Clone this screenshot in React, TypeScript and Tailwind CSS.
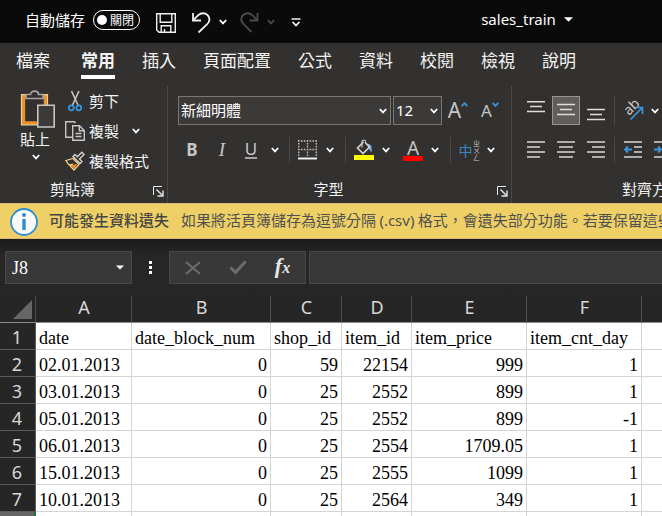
import React from "react";

const UI = "font-['Noto_Sans','Noto_Sans_CJK_TC',sans-serif]";
const CJK = "font-['Noto_Sans_CJK_TC',sans-serif]";
const SERIF = "font-['Liberation_Serif',serif]";

function Chevron({ className = "text-white" }: { className?: string }) {
  return (
    <svg width="8" height="6" viewBox="0 0 8 6" fill="none" className={className} aria-hidden="true">
      <path d="M0.8 1 L4 4.4 L7.2 1" stroke="currentColor" strokeWidth="1.8" />
    </svg>
  );
}

function Caret() {
  return (
    <svg width="9" height="5" viewBox="0 0 9 5" aria-hidden="true">
      <path d="M0 0.3 H9 L4.5 4.8 Z" fill="#fff" />
    </svg>
  );
}

function IconButton({
  label,
  className = "",
  children,
}: {
  label: string;
  className?: string;
  children: React.ReactNode;
}) {
  return (
    <button type="button" aria-label={label} className={`flex shrink-0 items-center justify-center ${className}`}>
      {children}
    </button>
  );
}

function SplitButton({ label, children }: { label: string; children: React.ReactNode }) {
  return (
    <div className="flex h-full shrink-0">
      <IconButton label={label} className="w-5">
        {children}
      </IconButton>
      <IconButton label={`${label}選項`} className="w-6">
        <Chevron />
      </IconButton>
    </div>
  );
}

function Divider() {
  return <div className="mr-2 ml-[3px] h-full w-px shrink-0 bg-[#4a4948]" />;
}

function GroupFooter({ title }: { title: string }) {
  return (
    <div className="flex h-[27px] items-center">
      <span className="flex-1 text-center">{title}</span>
      <IconButton label={`${title}設定`} className="mr-[3px] ml-2 pt-1">
        <svg width="11" height="11" viewBox="0 0 11 11" fill="none" stroke="#e8e8e8" aria-hidden="true">
          <path d="M0.5 9 V0.5 H9" />
          <path d="M3.5 3.5 L9 9" strokeWidth="1.4" />
          <path d="M10 4.5 V10 H4.5" strokeWidth="1.4" />
        </svg>
      </IconButton>
    </div>
  );
}

function TitleBar() {
  return (
    <header className="flex h-[43px] items-center overflow-hidden bg-[#0a0a0a] pb-[3px] pl-[25px] text-[15px] text-white">
      <label htmlFor="autosave" className={`shrink-0 ${CJK}`}>
        自動儲存
      </label>
      <span className="relative ml-2 flex h-5 w-[47px] shrink-0 items-center">
        <input
          id="autosave"
          type="checkbox"
          role="switch"
          className="absolute inset-0 m-0 h-full w-full appearance-none rounded-full border border-white"
        />
        <span className="ml-1 size-[10px] rounded-full bg-white" />
        <span className={`ml-[3px] text-[12px] leading-none ${CJK}`}>關閉</span>
      </span>
      <IconButton label="儲存" className="ml-4">
        <svg width="20" height="20" viewBox="0 0 20 20" fill="none" stroke="#f0f0f0" strokeWidth="1.4" aria-hidden="true" className="mt-[5px]">
          <path d="M0.7 0.7 H19.3 V19.3 H3 L0.7 17 Z" />
          <path d="M4.2 0.7 V9.3 H15.8 V0.7" />
          <path d="M5.2 19 V12.7 H14.8 V19 M8.5 19 V16" />
        </svg>
      </IconButton>
      <IconButton label="復原" className="ml-[15px]">
        <svg width="20" height="22" viewBox="0 0 20 22" fill="none" stroke="#f0f0f0" strokeWidth="1.8" aria-hidden="true" className="mt-[6px]">
          <path d="M2 1 V8.5 H10" />
          <path d="M2.2 8.2 L7 3.4 C10 0.4 14.8 0.6 17 3.6 C19.2 6.6 18.4 10 16.2 12.2 L7.5 20.5" />
        </svg>
      </IconButton>
      <IconButton label="復原選項" className="ml-2 pt-1">
        <Chevron />
      </IconButton>
      <IconButton label="取消復原" className="ml-[13px]">
        <svg width="20" height="22" viewBox="0 0 20 22" fill="none" stroke="#4c4c4c" strokeWidth="1.8" aria-hidden="true" className="mt-[6px]">
          <path d="M17.5 1 V8.5 H9.5" />
          <path d="M17.3 8.2 L12.5 3.4 C9.5 0.4 5 0.6 2.6 3.6 C0.4 6.6 1.4 10 3.6 12.2 L11.5 20" />
        </svg>
      </IconButton>
      <IconButton label="取消復原選項" className="ml-[7px] pt-1">
        <Chevron className="text-[#4c4c4c]" />
      </IconButton>
      <IconButton label="自訂快速存取工具列" className="ml-4 pt-1">
        <svg width="10" height="9" viewBox="0 0 10 9" fill="none" stroke="#fff" aria-hidden="true">
          <path d="M0.5 1 H9.5" strokeWidth="1.4" />
          <path d="M1.6 4 L5 7.5 L8.4 4" strokeWidth="1.7" />
        </svg>
      </IconButton>
      <button type="button" className={`mx-auto flex items-center gap-2 pb-[2px] pl-[91px] text-[15px] ${UI}`}>
        sales_train
        <Caret />
      </button>
    </header>
  );
}

const TABS = ["檔案", "常用", "插入", "頁面配置", "公式", "資料", "校閱", "檢視", "說明"];

function Tabs() {
  return (
    <nav className={`flex h-[37px] gap-[27px] bg-[#323130] pl-4 text-[17px] text-[#f3f3f3] ${CJK}`}>
      {TABS.map((tab) => {
        const active = tab === "常用";
        const file = tab === "檔案";
        return (
          <button
            key={tab}
            type="button"
            className={`flex h-9 shrink-0 items-center border-b-4 leading-none ${
              active ? "border-white font-bold" : "border-transparent"
            } ${file ? "mr-1" : ""}`}
          >
            {tab}
          </button>
        );
      })}
    </nav>
  );
}

function ClipboardGroup() {
  return (
    <section className="flex w-[168px] shrink-0 flex-col border-r border-[#4a4948]">
      <div className="flex h-[90px]">
        <button type="button" className="ml-5 flex w-9 shrink-0 flex-col items-start pt-1 leading-none">
          <svg width="36" height="38" viewBox="0 0 36 38" fill="none" aria-hidden="true">
            <path d="M3.5 6.5 H25.5 V33 H3.5 Z" stroke="#e8912d" strokeWidth="3.4" />
            <path d="M1.5 4.7 H27.5 V34.8 H1.5 Z" stroke="#f5d08a" strokeWidth="1.2" />
            <path d="M6 8.5 V4.5 H10.5 C10.5 0 18.5 0 18.5 4.5 H23 V8.5 Z" fill="#323130" stroke="#a5a4a3" strokeWidth="1.6" />
            <path d="M17.8 15.3 H34.2 V37 H17.8 Z" fill="#3b3a39" stroke="#c8c6c4" strokeWidth="1.6" />
          </svg>
          <span className="mt-[3px]">貼上</span>
          <span className="mt-2 ml-3">
            <Chevron />
          </span>
        </button>
        <div className="ml-[9px] flex flex-1 flex-col">
          <button type="button" className="flex h-[30px] items-center gap-1">
            <svg width="20" height="22" viewBox="0 0 20 22" fill="none" aria-hidden="true">
              <path d="M6.5 1 L13 15 M14 1 L7.5 15" stroke="#c8c6c4" strokeWidth="1.6" />
              <circle cx="6.3" cy="17.8" r="2.5" stroke="#3a96dd" strokeWidth="1.7" />
              <circle cx="13.8" cy="17.8" r="2.5" stroke="#3a96dd" strokeWidth="1.7" />
            </svg>
            剪下
          </button>
          <div className="flex h-[30px] items-center">
            <button type="button" className="flex items-center gap-1">
              <svg width="20" height="20" viewBox="0 0 20 20" fill="none" stroke="#c8c6c4" strokeWidth="1.4" aria-hidden="true">
                <path d="M7 16.3 H0.7 V0.7 H9.5 L10.5 2" />
                <path d="M7.7 4.7 H14.5 L19.3 9.5 V19.3 H7.7 Z" />
                <path d="M14.3 5 V9.7 H19" />
                <path d="M10.5 12.5 H16.5 M10.5 15.5 H16.5" />
              </svg>
              複製
            </button>
            <IconButton label="複製選項" className="ml-[13px]">
              <Chevron />
            </IconButton>
          </div>
          <button type="button" className="flex h-[30px] items-center gap-1">
            <svg width="20" height="20" viewBox="0 0 20 20" fill="none" aria-hidden="true">
              <path d="M1 9.5 L8 7.5 L14 13.5 L9 19 L5.5 15.5 L7 13.5 L4 14 Z" fill="#323130" stroke="#f5d08a" strokeWidth="1.3" />
              <path d="M5.5 14.5 L12.5 12.8 L9 18 Z" fill="#e8912d" />
              <path d="M8 5.5 L15 12.5 L17 10.5 L14.5 8 L19 3.5 L16.8 1.3 L12.3 5.8 L10 3.5 Z" fill="#323130" stroke="#d6d4d2" strokeWidth="1.4" />
            </svg>
            複製格式
          </button>
        </div>
      </div>
      <GroupFooter title="剪貼簿" />
    </section>
  );
}

function FontGroup() {
  return (
    <section className="flex w-[344px] shrink-0 flex-col border-r border-[#4a4948]">
      <div className="flex h-[90px] flex-col gap-3 pt-[10px]">
        <div className="flex h-[29px] pl-[10px]">
          <div className="relative w-[213px]">
            <select
              aria-label="字型名稱"
              defaultValue="新細明體"
              className="h-full w-full appearance-none border border-[#797775] bg-[#3b3a39] pl-[2px] text-[15px] text-white"
            >
              <option>新細明體</option>
            </select>
            <span className="pointer-events-none absolute inset-y-0 right-1 flex items-center">
              <Chevron />
            </span>
          </div>
          <div className="relative ml-[2px] w-[49px]">
            <select
              aria-label="字型大小"
              defaultValue="12"
              className={`h-full w-full appearance-none border border-[#797775] bg-[#3b3a39] pl-[2px] text-[15px] text-white ${UI}`}
            >
              <option>12</option>
            </select>
            <span className="pointer-events-none absolute inset-y-0 right-1 flex items-center">
              <Chevron />
            </span>
          </div>
          <button type="button" aria-label="放大字型" className={`flex w-8 items-center justify-center text-[#c8c6c4] ${UI}`}>
            <span className="text-[21px] leading-none">A</span>
            <svg width="7" height="5" viewBox="0 0 7 5" fill="none" className="-mt-3" aria-hidden="true">
              <path d="M0.7 4.2 L3.5 1.2 L6.3 4.2" stroke="#3a96dd" strokeWidth="1.8" />
            </svg>
          </button>
          <button type="button" aria-label="縮小字型" className={`flex w-8 items-center justify-center text-[#c8c6c4] ${UI}`}>
            <span className="text-[17px] leading-none">A</span>
            <svg width="7" height="5" viewBox="0 0 7 5" fill="none" className="-mt-3" aria-hidden="true">
              <path d="M0.7 0.8 L3.5 3.8 L6.3 0.8" stroke="#3a96dd" strokeWidth="1.8" />
            </svg>
          </button>
        </div>
        <div className="flex h-[26px] pl-[9px] text-[#c8c6c4]">
          <button type="button" className={`w-[30px] pb-[2px] text-[17px] leading-none font-bold ${UI}`}>
            B
          </button>
          <button type="button" className={`w-[30px] pb-[2px] text-[19px] leading-none italic ${SERIF}`}>
            I
          </button>
          <button type="button" className={`flex w-7 items-center justify-center text-[17px] ${UI}`}>
            <span className="border-b-2 border-[#a5a4a3] leading-4">U</span>
          </button>
          <IconButton label="底線選項" className="w-5">
            <Chevron />
          </IconButton>
          <div className="mr-2 ml-1 h-full w-px bg-[#4a4948]" />
          <SplitButton label="框線">
            <svg width="20" height="20" viewBox="0 0 20 20" fill="none" stroke="#c8c6c4" aria-hidden="true">
              <path d="M0 1 H19 M0 9.5 H19 M0.7 0 V17 M9.5 0 V17 M18.3 0 V17" strokeWidth="1.3" strokeDasharray="1.6 1.3" />
              <path d="M0 18.5 H19" stroke="#f0f0f0" strokeWidth="2" />
            </svg>
          </SplitButton>
          <Divider />
          <SplitButton label="填滿色彩">
            <svg width="20" height="22" viewBox="0 0 20 22" fill="none" aria-hidden="true">
              <path d="M13 4.5 C17 4.5 18.5 8 17.5 13.5 L14.5 9.5 Z" fill="#6aa9dc" />
              <path d="M9.5 3 L3.5 9 L9 14.5 L15.5 8 L11.5 4" stroke="#d6d4d2" strokeWidth="1.6" />
              <path d="M8 8.5 V2.5 C8 0.6 11.5 0.6 11.5 2.5 V4.5" stroke="#c8c6c4" strokeWidth="1.2" />
              <path d="M0 16 H20 V21 H0 Z" fill="#ff0" />
            </svg>
          </SplitButton>
          <div className="w-[5px]" />
          <SplitButton label="字型色彩">
            <span className={`flex w-5 flex-col items-center border-b-[5px] border-[#f00] text-[19px] leading-4 ${UI}`}>A</span>
          </SplitButton>
          <Divider />
          <SplitButton label="注音標示">
            <span className="flex items-center">
              <span className="text-[14px] leading-none text-[#3a86c4]">中</span>
              <span className="text-[7px] leading-[7px] text-[#c8c6c4] [writing-mode:vertical-rl]">ㄓㄨㄥ</span>
            </span>
          </SplitButton>
        </div>
      </div>
      <GroupFooter title="字型" />
    </section>
  );
}

function Lines({ d, heavy = false }: { d: string; heavy?: boolean }) {
  return (
    <svg
      width="18"
      height="20"
      viewBox="0 0 18 20"
      fill="none"
      stroke={heavy ? "#b0aead" : "#e0dedc"}
      strokeWidth={heavy ? 2 : 1.5}
      aria-hidden="true"
    >
      <path d={d} />
    </svg>
  );
}

function AlignmentGroup() {
  return (
    <section className="flex min-w-0 flex-1 flex-col overflow-hidden">
      <div className="flex h-[90px] flex-col gap-3 pt-[10px] pl-[9px]">
        <div className="flex h-[29px]">
          <IconButton label="靠上對齊" className="w-[30px]">
            <Lines d="M0 0.8 H18 M3 5.5 H15 M0 10.5 H18" />
          </IconButton>
          <IconButton label="置中對齊" className="mx-px w-7 border border-[#979593] bg-[#605e5c]">
            <Lines d="M0 3.5 H18 M3 8.5 H15 M0 13.5 H18" />
          </IconButton>
          <IconButton label="靠下對齊" className="w-[30px]">
            <Lines d="M0 8.5 H18 M3 13.5 H15 M0 18.5 H18" />
          </IconButton>
          <Divider />
          <SplitButton label="方向">
            <svg width="20" height="24" viewBox="0 0 20 24" fill="none" aria-hidden="true" className="shrink-0 overflow-visible">
              <text x="6" y="17" transform="rotate(-45 6 17)" fill="#c8c6c4" fontSize="14" className={UI}>
                ab
              </text>
              <path d="M7.5 20.5 L19 9 M12.5 8.5 H19.5 V15" stroke="#3a96dd" strokeWidth="1.7" />
            </svg>
          </SplitButton>
        </div>
        <div className="flex h-[26px]">
          <IconButton label="靠左對齊" className="w-[30px]">
            <Lines heavy d="M0 2 H18 M0 7 H13 M0 12 H18 M0 17 H13" />
          </IconButton>
          <IconButton label="水平置中" className="w-[30px]">
            <Lines heavy d="M0 2 H18 M2 7 H16 M0 12 H18 M2 17 H16" />
          </IconButton>
          <IconButton label="靠右對齊" className="w-[30px]">
            <Lines heavy d="M0 2 H18 M5 7 H18 M0 12 H18 M5 17 H18" />
          </IconButton>
          <Divider />
          <IconButton label="減少縮排" className="w-5">
            <svg width="18" height="20" viewBox="0 0 18 20" fill="none" stroke="#b0aead" strokeWidth="2" aria-hidden="true">
              <path d="M0 2 H18 M10 7 H18 M10 12 H18 M0 17 H18" />
              <path d="M8 9.5 H1 M4 6.5 L1 9.5 L4 12.5" stroke="#3a96dd" strokeWidth="1.8" />
            </svg>
          </IconButton>
          <IconButton label="增加縮排" className="ml-[10px] w-5">
            <svg width="18" height="20" viewBox="0 0 18 20" fill="none" stroke="#b0aead" strokeWidth="2" aria-hidden="true">
              <path d="M0 2 H18 M10 7 H18 M10 12 H18 M0 17 H18" />
              <path d="M0 9.5 H7 M4 6.5 L7 9.5 L4 12.5" stroke="#3a96dd" strokeWidth="1.8" />
            </svg>
          </IconButton>
        </div>
      </div>
      <div className="flex h-[27px] items-center pl-[110px] whitespace-nowrap">對齊方式</div>
    </section>
  );
}

function Ribbon() {
  return (
    <div className={`flex bg-[#323130] pt-[6px] text-[15px] text-[#f3f3f3] ${CJK}`}>
      <ClipboardGroup />
      <FontGroup />
      <AlignmentGroup />
    </div>
  );
}

function WarningBar() {
  return (
    <div className={`flex h-9 items-center overflow-hidden border-y border-[#dcb878] bg-[#efd067] pl-[10px] text-[15px] whitespace-nowrap text-[#444] ${CJK}`}>
      <svg width="28" height="28" viewBox="0 0 28 28" className="mt-[2px] shrink-0" aria-hidden="true">
        <circle cx="14" cy="14" r="13" fill="#fafafa" stroke="#2b8fcf" strokeWidth="1.8" />
        <circle cx="14" cy="7" r="2" fill="#2b8fcf" />
        <path d="M12.3 11 H15.7 V22 H12.3 Z" fill="#2b8fcf" />
      </svg>
      <strong className="ml-[11px] pb-[2px] font-medium">可能發生資料遺失</strong>
      <span className="ml-3 pb-[2px] text-[#505050]">
        如果將活頁簿儲存為逗號分隔 <span className={UI}>(.csv)</span> 格式，會遺失部分功能。若要保留這些功能
      </span>
    </div>
  );
}

function FormulaBar() {
  return (
    <div className="bg-linear-to-b from-[#1c1c1c] to-[#262626] to-30% pt-3 pb-3">
      <div className="flex h-[33px] pl-[5px]">
        <div className="flex w-[127px] shrink-0 border border-[#484848] bg-[#383838]">
          <input
            aria-label="名稱方塊"
            defaultValue="J8"
            className={`min-w-0 flex-1 bg-transparent pt-[2px] pl-[6px] text-[18px] text-white outline-none ${SERIF}`}
          />
          <IconButton label="名稱清單" className="w-[22px]">
            <svg width="8" height="5" viewBox="0 0 8 5" aria-hidden="true">
              <path d="M0 0.5 H8 L4 4.5 Z" fill="#fff" />
            </svg>
          </IconButton>
        </div>
        <div className="flex w-[37px] shrink-0 flex-col items-center justify-center gap-[2px]">
          <span className="size-[3px] bg-white" />
          <span className="size-[3px] bg-white" />
          <span className="size-[3px] bg-white" />
        </div>
        <div className="flex w-[137px] shrink-0 border border-[#484848] bg-[#383838]">
          <IconButton label="取消" className="w-[45px]">
            <svg width="16" height="14" viewBox="0 0 16 14" fill="none" stroke="#6c6c6c" strokeWidth="2.2" aria-hidden="true">
              <path d="M1 1 L15 13 M15 1 L1 13" />
            </svg>
          </IconButton>
          <IconButton label="輸入" className="w-[45px]">
            <svg width="18" height="15" viewBox="0 0 18 15" fill="none" stroke="#6c6c6c" strokeWidth="3" aria-hidden="true">
              <path d="M1.5 7.5 L6.5 12.5 L16.5 1.5" />
            </svg>
          </IconButton>
          <button type="button" aria-label="插入函數" className={`w-[45px] pb-1 text-[22px] leading-none font-bold text-[#e8e8e8] italic ${SERIF}`}>
            f<span className="text-[16px]">x</span>
          </button>
        </div>
        <input aria-label="資料編輯列" className="ml-[3px] min-w-0 flex-1 border border-r-0 border-[#484848] bg-[#383838] px-2 text-white outline-none" />
      </div>
    </div>
  );
}

const COLUMNS = ["A", "B", "C", "D", "E", "F"];
const ROWS = [
  ["date", "date_block_num", "shop_id", "item_id", "item_price", "item_cnt_day"],
  ["02.01.2013", "0", "59", "22154", "999", "1"],
  ["03.01.2013", "0", "25", "2552", "899", "1"],
  ["05.01.2013", "0", "25", "2552", "899", "-1"],
  ["06.01.2013", "0", "25", "2554", "1709.05", "1"],
  ["15.01.2013", "0", "25", "2555", "1099", "1"],
  ["10.01.2013", "0", "25", "2564", "349", "1"],
];

function Sheet() {
  return (
    <table className="w-full table-fixed border-separate border-spacing-0 bg-white text-[18px] leading-none text-black">
      <colgroup>
        <col className="w-9" />
        <col className="w-24" />
        <col className="w-[139px]" />
        <col className="w-[71px]" />
        <col className="w-[70px]" />
        <col className="w-[115px]" />
        <col className="w-[115px]" />
        <col />
      </colgroup>
      <thead className={`bg-[#262626] text-[#d8d8d8] ${UI}`}>
        <tr className="h-[27px]">
          <th aria-label="全選" className="border-r border-b border-r-[#505050] border-b-[#8a8a8a] p-0 pr-[3px]">
            <svg width="19" height="19" viewBox="0 0 19 19" className="ml-auto" aria-hidden="true">
              <path d="M19 0 V19 H0 Z" fill="#666" />
            </svg>
          </th>
          {COLUMNS.map((c) => (
            <th key={c} scope="col" className="border-r border-b border-r-[#505050] border-b-[#8a8a8a] p-0 pb-1 pl-px font-normal">
              {c}
            </th>
          ))}
          <th aria-label="G" className="border-b border-[#8a8a8a] p-0" />
        </tr>
      </thead>
      <tbody className={SERIF}>
        {ROWS.map((row, r) => (
          <tr key={r} className="h-[27px]">
            <th scope="row" className={`border-r border-b border-[#5a5a5a] bg-[#262626] p-0 pt-px pr-px text-center font-normal text-[#d8d8d8] ${UI}`}>
              {r + 1}
            </th>
            {row.map((cell, c) => (
              <td
                key={c}
                className={`border-r border-b border-[#d4d4d4] p-0 pt-1 whitespace-nowrap ${
                  r === 0 || c === 0 ? "pl-[3px] text-left" : "pr-[3px] text-right"
                }`}
              >
                {cell}
              </td>
            ))}
            <td className="border-b border-[#d4d4d4] p-0" />
          </tr>
        ))}
        <tr className="h-[27px]">
          <th scope="row" aria-label="8" className="border-r-2 border-[#217346] bg-[#666] p-0" />
          {COLUMNS.map((c) => (
            <td key={c} className="border-r border-b border-[#d4d4d4] p-0" />
          ))}
          <td className="border-b border-[#d4d4d4] p-0" />
        </tr>
      </tbody>
    </table>
  );
}

export default function App() {
  return (
    <main lang="zh-Hant" className="h-screen overflow-hidden bg-[#262626]">
      <TitleBar />
      <Tabs />
      <Ribbon />
      <WarningBar />
      <FormulaBar />
      <Sheet />
    </main>
  );
}
